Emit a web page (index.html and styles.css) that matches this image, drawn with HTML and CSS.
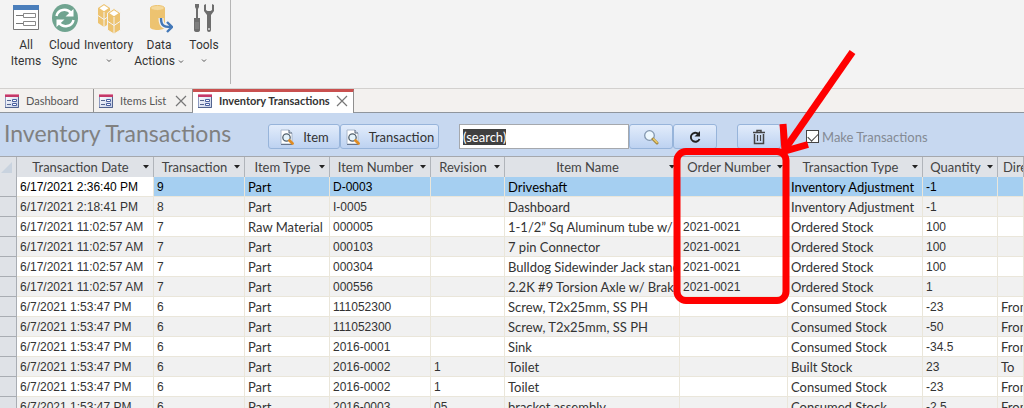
FILE: index.html
```html
<!DOCTYPE html>
<html lang="en">
<head>
  <meta charset="UTF-8" />
  <title>Inventory Transactions</title>
  <link rel="stylesheet" href="styles.css">
</head>
<body>
  <!-- Shared icons -->
  <svg class="sprite" width="0" height="0" aria-hidden="true">
    <defs>
      <linearGradient id="formFill" x1="0" y1="0" x2="1" y2="1">
        <stop offset="0" stop-color="#ffffff" />
        <stop offset="1" stop-color="#c3cde6" />
      </linearGradient>
    </defs>
    <symbol id="icon-form" viewBox="0 0 16 16">
      <path d="M1.500 2v12.500h13V2z" fill="url(#formFill)" stroke="#8d9ac0" />
      <path d="M1 14.500h13.500V4" fill="none" stroke="#53648f" />
      <path d="M1 1h14v3H1z" fill="#c43868" />
      <path d="M1 1h14v1H1z" fill="#df83a2" />
      <path d="M3 7.500h4M3 11.500h4" stroke="#55658f" />
      <path d="M8.500 6.500h4v2h-4zM8.500 10.500h4v2h-4z" fill="#fff" stroke="#4a60a0" />
    </symbol>
    <symbol id="icon-close" viewBox="0 0 12 12">
      <path d="M1 1l10 10M11 1L1 11" fill="none" stroke="#777" stroke-width="1.200" />
    </symbol>
    <symbol id="icon-preview" viewBox="0 0 16 16">
      <path d="M2 1h8l3 3v11H2z" fill="#fff" stroke="#a9b8cd" />
      <path d="M2 15.500h11" stroke="#66748c" />
      <path d="M10 1v3h3" fill="#dce5f0" stroke="#53627a" />
      <circle cx="7.500" cy="8.500" r="3.700" fill="#e5f3fb" stroke="#53606c" stroke-width="1.300" />
      <path d="M10.500 11.500l3 3" stroke="#df8b22" stroke-width="2.800" stroke-linecap="round" />
    </symbol>
    <symbol id="icon-down" viewBox="0 0 6 4">
      <path d="M0 0h6L3 3.500z" fill="#222" />
    </symbol>
    <symbol id="icon-chevron" viewBox="0 0 6 4">
      <path d="M1 .5l2 2 2-2" fill="none" stroke="#555" />
    </symbol>
  </svg>

  <div class="app">
    <header class="ribbon">
      <button class="ribbon-btn w-all" type="button">
        <svg class="ribbon-icon" viewBox="0 0 28 30">
          <path d="M1.500 1.500h25v24h-25z" fill="#fff" stroke="#777" />
          <path d="M1 1h26v5H1z" fill="#4a7ebb" />
          <path d="M4 11.500h7M4 19.500h7" stroke="#777" />
          <path d="M11.500 9.500h12v4h-12zM11.500 17.500h12v4h-12z" fill="#fff" stroke="#888" />
        </svg>
        <span>All</span><span>Items</span>
      </button>
      <button class="ribbon-btn w-sync" type="button">
        <svg class="ribbon-icon" viewBox="0 0 28 30">
          <ellipse cx="14" cy="14" rx="13" ry="14" fill="#70a490" />
          <path d="M5.500 12C7 5 16 4 20 9M22.500 16c-1.500 7-10.500 8-14.500 3" fill="none" stroke="#fff" stroke-width="2.500" />
          <path d="M22.500 5v7.500h-8zM5.500 23v-7.500h8z" fill="#fff" />
        </svg>
        <span>Cloud</span><span>Sync</span>
      </button>
      <button class="ribbon-btn w-inv" type="button">
        <svg class="ribbon-icon" viewBox="0 0 28 30">
          <g fill="#edc370">
            <path d="M3 4l6-4 6 4v15l-6 4-6-4z" />
            <path d="M4.500 4.200L9 1.200l4.500 3L9 7.200z" fill="#fff" />
            <path d="M9 8v15M3 11.500l6 4 6-4" fill="none" stroke="#f3f3f3" />
            <path d="M12.500 9l6.500-4.500 6.500 4.500v17L19 30l-6.500-4z" stroke="#f3f3f3" />
            <path d="M14.500 9.200l4.500-3 4.500 3-4.500 3z" fill="#fff" />
            <path d="M19 13v16M13 17.500l6 4 6-4" fill="none" stroke="#f3f3f3" />
          </g>
        </svg>
        <span>Inventory</span>
        <span class="only-chevron"><svg class="chevron"><use href="#icon-chevron" /></svg></span>
      </button>
      <button class="ribbon-btn w-data" type="button">
        <svg class="ribbon-icon" viewBox="0 0 28 30">
          <path d="M5 4v19c0 4 15 4 15 0V4z" fill="#edc370" />
          <ellipse cx="12.500" cy="4" rx="7" ry="2.500" fill="#f5d99b" stroke="#edc370" />
          <path d="M16 14c0 7 2 9 10 9" fill="none" stroke="#f3f3f3" stroke-width="5" />
          <path d="M16 14c0 7 2 9 10 9M22 18l5 5-5 5" fill="none" stroke="#4378b8" stroke-width="2.400" />
        </svg>
        <span>Data</span>
        <span>Actions <svg class="chevron"><use href="#icon-chevron" /></svg></span>
      </button>
      <button class="ribbon-btn w-tools" type="button">
        <svg class="ribbon-icon" viewBox="0 0 28 30">
          <path d="M5 0h4v3L8 5v9h2v12q0 2-3 2t-3-2V14h2V5L5 3z" fill="#6d6d6d" />
          <path d="M6 18v7M8 18v7" stroke="#aaa" stroke-width=".6" />
          <path d="M14 1v6l3 4v15q0 2 2 2t2-2V11l3-4V1l-2-1v6l-1.500 1h-3L16 6V0z" fill="#6d6d6d" />
          <circle cx="19" cy="25" r="1" fill="#ddd" />
        </svg>
        <span>Tools</span>
        <span class="only-chevron"><svg class="chevron"><use href="#icon-chevron" /></svg></span>
      </button>
    </header>

    <nav class="tabs">
      <div class="tab tab-dashboard">
        <svg class="tab-icon"><use href="#icon-form" /></svg>
        <a href="#dashboard">Dashboard</a>
      </div>
      <div class="tab tab-items">
        <svg class="tab-icon"><use href="#icon-form" /></svg>
        <a href="#items">Items List</a>
        <button class="close" type="button" aria-label="Close Items List"><svg><use href="#icon-close" /></svg></button>
      </div>
      <div class="tab tab-transactions active">
        <svg class="tab-icon"><use href="#icon-form" /></svg>
        <a href="#transactions">Inventory Transactions</a>
        <button class="close" type="button" aria-label="Close Inventory Transactions"><svg><use href="#icon-close" /></svg></button>
      </div>
    </nav>

    <form class="toolbar" id="searchForm">
      <h1>Inventory Transactions</h1>
      <div class="group">
        <button class="btn btn-item" type="button"><svg class="icon"><use href="#icon-preview" /></svg>Item</button>
        <button class="btn btn-transaction" type="button"><svg class="icon"><use href="#icon-preview" /></svg>Transaction</button>
      </div>
      <div class="group">
        <input class="search" type="text" id="search" value="(search)" aria-label="Search" />
        <button class="btn btn-icon" type="submit" aria-label="Search">
          <svg class="icon" viewBox="0 0 16 16">
            <circle cx="6.500" cy="6.500" r="4.800" fill="#eef8fe" stroke="#8296ae" stroke-width="1.300" />
            <path d="M10 10l4 4" stroke="#a08643" stroke-width="3" stroke-linecap="round" />
            <path d="M10.500 10l3.500 3.500" stroke="#f0cf68" stroke-width="1.400" stroke-linecap="round" />
          </svg>
        </button>
        <button class="btn btn-icon" type="button" aria-label="Refresh">
          <svg class="icon" viewBox="0 0 16 16">
            <path d="M11.500 5A4.500 4.500 0 1 0 12.500 10" fill="none" stroke="#222" stroke-width="1.900" />
            <path d="M13 2v5.500H7.500z" fill="#222" />
          </svg>
        </button>
      </div>
      <button class="btn btn-icon" type="button" aria-label="Delete">
        <svg class="icon" viewBox="0 0 16 16">
          <path d="M3.500 5v9.500h9V5M2 3.500h12M6 3V1.500h4V3" fill="none" stroke="#444" stroke-width="1.500" />
          <path d="M6.500 6v6M9.500 6v6" stroke="#444" stroke-width="1.200" />
        </svg>
      </button>
      <label class="make" for="make"><input type="checkbox" id="make" checked />Make Transactions</label>
    </form>

    <main class="sheet">
      <table>
        <colgroup>
          <col class="c-select"><col class="c-date"><col class="c-trans"><col class="c-type"><col class="c-number">
          <col class="c-rev"><col class="c-name"><col class="c-order"><col class="c-ttype"><col class="c-qty"><col>
        </colgroup>
        <thead>
          <tr>
            <th><svg class="corner" viewBox="0 0 11 11"><path d="M11 0v11H0z" fill="#c9d3df" /></svg></th>
            <th><div><span>Transaction Date</span><svg><use href="#icon-down" /></svg></div></th>
            <th><div><span>Transaction</span><svg><use href="#icon-down" /></svg></div></th>
            <th><div><span>Item Type</span><svg><use href="#icon-down" /></svg></div></th>
            <th><div><span>Item Number</span><svg><use href="#icon-down" /></svg></div></th>
            <th><div><span>Revision</span><svg><use href="#icon-down" /></svg></div></th>
            <th><div><span>Item Name</span><svg><use href="#icon-down" /></svg></div></th>
            <th><div><span>Order Number</span><svg><use href="#icon-down" /></svg></div></th>
            <th><div><span>Transaction Type</span><svg><use href="#icon-down" /></svg></div></th>
            <th><div><span>Quantity</span><svg><use href="#icon-down" /></svg></div></th>
            <th class="last">Direction</th>
          </tr>
        </thead>
        <tbody>
          <tr class="current"><td></td><td>6/17/2021 2:36:40 PM</td><td>9</td><td>Part</td><td>D-0003</td><td></td><td>Driveshaft</td><td></td><td>Inventory Adjustment</td><td>-1</td><td></td></tr>
          <tr><td></td><td>6/17/2021 2:18:41 PM</td><td>8</td><td>Part</td><td>I-0005</td><td></td><td>Dashboard</td><td></td><td>Inventory Adjustment</td><td>-1</td><td></td></tr>
          <tr><td></td><td>6/17/2021 11:02:57 AM</td><td>7</td><td>Raw Material</td><td>000005</td><td></td><td>1-1/2” Sq Aluminum tube w/ 1</td><td>2021-0021</td><td>Ordered Stock</td><td>100</td><td></td></tr>
          <tr><td></td><td>6/17/2021 11:02:57 AM</td><td>7</td><td>Part</td><td>000103</td><td></td><td>7 pin Connector</td><td>2021-0021</td><td>Ordered Stock</td><td>100</td><td></td></tr>
          <tr><td></td><td>6/17/2021 11:02:57 AM</td><td>7</td><td>Part</td><td>000304</td><td></td><td>Bulldog Sidewinder Jack stand</td><td>2021-0021</td><td>Ordered Stock</td><td>100</td><td></td></tr>
          <tr><td></td><td>6/17/2021 11:02:57 AM</td><td>7</td><td>Part</td><td>000556</td><td></td><td>2.2K #9 Torsion Axle w/ Brake</td><td>2021-0021</td><td>Ordered Stock</td><td>1</td><td></td></tr>
          <tr><td></td><td>6/7/2021 1:53:47 PM</td><td>6</td><td>Part</td><td>111052300</td><td></td><td>Screw, T2x25mm, SS PH</td><td></td><td>Consumed Stock</td><td>-23</td><td>From</td></tr>
          <tr><td></td><td>6/7/2021 1:53:47 PM</td><td>6</td><td>Part</td><td>111052300</td><td></td><td>Screw, T2x25mm, SS PH</td><td></td><td>Consumed Stock</td><td>-50</td><td>From</td></tr>
          <tr><td></td><td>6/7/2021 1:53:47 PM</td><td>6</td><td>Part</td><td>2016-0001</td><td></td><td>Sink</td><td></td><td>Consumed Stock</td><td>-34.5</td><td>From</td></tr>
          <tr><td></td><td>6/7/2021 1:53:47 PM</td><td>6</td><td>Part</td><td>2016-0002</td><td>1</td><td>Toilet</td><td></td><td>Built Stock</td><td>23</td><td>To</td></tr>
          <tr><td></td><td>6/7/2021 1:53:47 PM</td><td>6</td><td>Part</td><td>2016-0002</td><td>1</td><td>Toilet</td><td></td><td>Consumed Stock</td><td>-23</td><td>From</td></tr>
          <tr><td></td><td>6/7/2021 1:53:47 PM</td><td>6</td><td>Part</td><td>2016-0003</td><td>05</td><td>bracket assembly</td><td></td><td>Consumed Stock</td><td>-2.5</td><td>From</td></tr>
        </tbody>
      </table>
    </main>

    <!-- Callout around the Order Number column -->
    <svg class="callout" viewBox="0 0 190 260" aria-hidden="true">
      <rect x="7" y="106.500" width="109" height="149" rx="9" />
      <path d="M182.500 7L115 104" />
      <path d="M113 79L115 106L138 99.500" />
    </svg>
  </div>

  <script>
    const form = document.getElementById("searchForm");
    const search = document.getElementById("search");

    form.addEventListener("submit", (e) => e.preventDefault());

    search.focus();
    search.select();
  </script>
</body>
</html>
```
FILE: styles.css
```css
* {
  box-sizing: border-box;
}

body {
  margin: 0;
  height: 100vh;
  overflow: hidden;
  font-family: Lato, "Liberation Sans", sans-serif;
  font-size: 13px;
  color: #333;
  background: #f3f3f3;
}

button, input {
  font: inherit;
  color: inherit;
}

svg {
  flex: none;
}

.sprite {
  position: absolute;
}

.app {
  position: relative;
  display: flex;
  flex-direction: column;
  height: 100%;
}

/* Ribbon */
.ribbon {
  display: flex;
  flex: none;
  align-items: flex-start;
  height: 89px;
  padding-left: 6px;
  border-bottom: 1px solid #d2d0ce;
}

.ribbon::after {
  content: "";
  height: 84px;
  border-left: 1px solid #b5b5b5;
}

.ribbon-btn {
  display: flex;
  flex-direction: column;
  align-items: center;
  padding: 4px 0 0;
  border: 0;
  background: none;
  font-family: Roboto, sans-serif;
  font-size: 12px;
  line-height: 16px;
  white-space: nowrap;
}

.ribbon-icon {
  width: 28px;
  height: 30px;
  margin-bottom: 3px;
}

.w-all { width: 40px; }
.w-sync { width: 37px; }
.w-inv { width: 51px; }
.w-data { width: 50px; }
.w-tools { width: 40px; margin-right: 6px; }

.chevron {
  width: 6px;
  height: 4px;
  vertical-align: middle;
}

.only-chevron {
  line-height: 14px;
}

/* Tabs */
.tabs {
  display: flex;
  flex: none;
  height: 24px;
  background: #f3f1ef;
  border-bottom: 1px solid #8f959c;
  font-size: 11px;
}

.tab {
  display: flex;
  align-items: center;
  gap: 6px;
  height: 23px;
  padding: 0 5px 0 4px;
  border-right: 1px solid #8f8f8f;
  white-space: nowrap;
}

.tab a {
  color: #555;
  text-decoration: none;
}

.tab-dashboard { width: 94px; }
.tab-items { width: 99px; }
.tab-transactions { width: 161px; }

.tab.active {
  height: 24px;
  padding-bottom: 4px;
  border-top: 3px solid #c9504f;
  background: #fff;
}

.tab.active a {
  color: #333;
  font-weight: bold;
}

.tab-icon {
  width: 16px;
  height: 16px;
}

.close {
  display: flex;
  margin-left: auto;
  padding: 0;
  border: 0;
  background: none;
}

.close svg {
  width: 12px;
  height: 12px;
}

/* Toolbar */
.toolbar {
  display: flex;
  flex: none;
  align-items: center;
  gap: 20px;
  height: 43px;
  padding: 4px 4px 0;
  background: #c7d8f0;
}

h1 {
  width: 244px;
  margin: 0;
  padding-bottom: 7px;
  font-size: 23px;
  font-weight: normal;
  line-height: 28px;
  color: #808080;
  white-space: nowrap;
}

.group {
  display: flex;
}

.btn {
  display: flex;
  align-items: center;
  justify-content: center;
  gap: 8px;
  height: 25px;
  padding: 0;
  border: 1px solid #97b4da;
  border-radius: 3px;
  background: linear-gradient(#e2ecfb, #bdd2f1);
}

.btn-item { width: 72px; }
.btn-transaction { width: 99px; }
.btn-icon { width: 44px; }

.icon {
  width: 16px;
  height: 16px;
}

.search {
  width: 170px;
  height: 25px;
  padding: 0 3px;
  border: 1px solid #a5a8ad;
  outline: 0;
  background: #fff;
}

.search::selection {
  color: #fff;
  background: #404040;
}

.make {
  display: flex;
  align-items: center;
  gap: 3px;
  margin-left: 5px;
  color: #848a94;
  white-space: nowrap;
}

.make input {
  appearance: none;
  width: 13px;
  height: 13px;
  margin: 0;
  border: 1px solid #444;
  background: #fff;
}

.make input:checked::before {
  content: "";
  display: block;
  width: 9px;
  height: 5px;
  margin: 2px 1px;
  border: solid #444;
  border-width: 0 0 1px 1px;
  transform: rotate(-45deg);
}

/* Datasheet */
.sheet {
  flex: 1;
  min-height: 0;
  overflow: hidden;
  border-top: 1px solid #a5a8ad;
  background: #fff;
}

table {
  width: 100%;
  table-layout: fixed;
  border-collapse: separate;
  border-spacing: 0;
}

.c-select { width: 17px; }
.c-date { width: 137px; }
.c-trans { width: 91px; }
.c-type { width: 85px; }
.c-number { width: 101px; }
.c-rev { width: 74px; }
.c-name { width: 175px; }
.c-order { width: 108px; }
.c-ttype { width: 135px; }
.c-qty { width: 75px; }

th, td {
  height: 20px;
  overflow: hidden;
  line-height: 19px;
  text-align: left;
  white-space: nowrap;
}

th {
  padding: 0 4px 0 1px;
  border-right: 1px solid #b0b4ba;
  background: #dfe2e7;
  font-weight: normal;
  color: #444;
}

th div {
  display: flex;
  align-items: center;
}

th span {
  flex: 1;
  text-align: center;
}

th div svg {
  width: 6px;
  height: 4px;
}

th.last {
  padding: 0 0 0 5px;
}

.corner {
  display: block;
  width: 11px;
  height: 11px;
  margin-left: auto;
}

td {
  padding: 1px 0 0 3px;
  border-right: 1px solid #eae6da;
  border-bottom: 1px solid #eae6da;
  line-height: 18px;
}

tbody tr:nth-child(even) {
  background: #f1f1f1;
}

tbody tr.current {
  background: #a5cff1;
  color: #000;
}

tbody tr td:first-child {
  border-color: #a9adb3;
  background: #dfe2e7;
}

.current td:nth-child(2) {
  background: #fff;
}

/* Columns that hold dates and numbers */
td:nth-child(2), td:nth-child(3), td:nth-child(5), td:nth-child(6), td:nth-child(8), td:nth-child(10) {
  font-family: "Liberation Sans", sans-serif;
  font-size: 12px;
}

.callout {
  position: absolute;
  top: 45px;
  left: 670px;
  width: 190px;
  height: 260px;
  fill: none;
  stroke: #f00;
  stroke-width: 7;
  pointer-events: none;
}
```
